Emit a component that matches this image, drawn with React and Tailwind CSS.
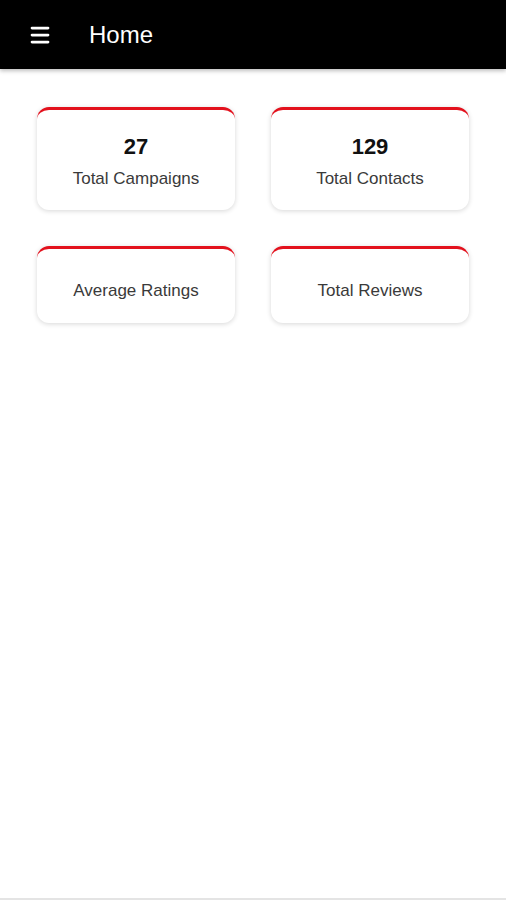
import { Menu } from "lucide-react";

const stats = [
  { value: "27", label: "Total Campaigns" },
  { value: "129", label: "Total Contacts" },
  { value: "", label: "Average Ratings" },
  { value: "", label: "Total Reviews" },
];

function StatCard({ value, label }) {
  return (
    <div
      className={`flex flex-col items-center rounded-[12px] border-t-[3px] border-[#e3111d] bg-white shadow-[0_1px_5px_rgba(0,0,0,0.16)] ${
        value ? "pt-[23px] pb-[19px]" : "pt-[30px] pb-[20px]"
      }`}
    >
      {value && (
        <div className="text-[22px] font-bold leading-[28px] text-[#111]">{value}</div>
      )}
      <div className={`text-[17px] leading-[24px] text-[#3a3a3a] ${value ? "mt-[6px]" : ""}`}>
        {label}
      </div>
    </div>
  );
}

export default function App() {
  return (
    <div className="flex h-[900px] flex-col bg-white font-['Liberation_Sans',Arial,sans-serif]">
      {/* top bar */}
      <header className="z-10 flex h-[69px] shrink-0 items-center bg-black pl-[28px] shadow-[0_2px_4px_rgba(0,0,0,0.25)]">
        <Menu size={24} strokeWidth={2.75} className="text-white" />
        <h1 className="ml-[37px] text-[24px] font-normal text-white">Home</h1>
      </header>

      <main className="flex-1 px-[37px] pt-[38px]">
        <div className="grid grid-cols-2 gap-x-[36px] gap-y-[36px]">
          {stats.map((s) => (
            <StatCard key={s.label} {...s} />
          ))}
        </div>
      </main>

      <div className="h-[2px] shrink-0 bg-[#e4e4e4]" />
    </div>
  );
}
